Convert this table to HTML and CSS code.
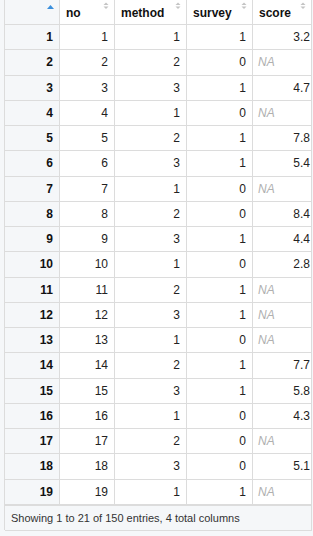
FILE: index.html
```html
<!DOCTYPE html>
<html>
<head>
<meta charset="utf-8">
<link rel="stylesheet" href="styles.css">
</head>
<body>
<div class="grid">
  <div class="hc rn"><svg class="asc" width="7" height="4" viewBox="0 0 7 4"><polygon points="3.5,0 7,4 0,4" /></svg></div>
  <div class="hc"><span>no</span><svg class="sort" width="6" height="8" viewBox="0 0 6 8"><polygon points="3,0.5 5.5,3 0.5,3"/><polygon points="0.5,4.5 5.5,4.5 3,7"/></svg></div>
  <div class="hc"><span>method</span><svg class="sort" width="6" height="8" viewBox="0 0 6 8"><polygon points="3,0.5 5.5,3 0.5,3"/><polygon points="0.5,4.5 5.5,4.5 3,7"/></svg></div>
  <div class="hc"><span>survey</span><svg class="sort" width="6" height="8" viewBox="0 0 6 8"><polygon points="3,0.5 5.5,3 0.5,3"/><polygon points="0.5,4.5 5.5,4.5 3,7"/></svg></div>
  <div class="hc last"><span>score</span><svg class="sort" width="6" height="8" viewBox="0 0 6 8"><polygon points="3,0.5 5.5,3 0.5,3"/><polygon points="0.5,4.5 5.5,4.5 3,7"/></svg></div>

  <div class="c rn">1</div><div class="c">1</div><div class="c">1</div><div class="c">1</div><div class="c sc">3.2</div>
  <div class="c rn">2</div><div class="c">2</div><div class="c">2</div><div class="c">0</div><div class="c na">NA</div>
  <div class="c rn">3</div><div class="c">3</div><div class="c">3</div><div class="c">1</div><div class="c sc">4.7</div>
  <div class="c rn">4</div><div class="c">4</div><div class="c">1</div><div class="c">0</div><div class="c na">NA</div>
  <div class="c rn">5</div><div class="c">5</div><div class="c">2</div><div class="c">1</div><div class="c sc">7.8</div>
  <div class="c rn">6</div><div class="c">6</div><div class="c">3</div><div class="c">1</div><div class="c sc">5.4</div>
  <div class="c rn">7</div><div class="c">7</div><div class="c">1</div><div class="c">0</div><div class="c na">NA</div>
  <div class="c rn">8</div><div class="c">8</div><div class="c">2</div><div class="c">0</div><div class="c sc">8.4</div>
  <div class="c rn">9</div><div class="c">9</div><div class="c">3</div><div class="c">1</div><div class="c sc">4.4</div>
  <div class="c rn">10</div><div class="c">10</div><div class="c">1</div><div class="c">0</div><div class="c sc">2.8</div>
  <div class="c rn">11</div><div class="c">11</div><div class="c">2</div><div class="c">1</div><div class="c na">NA</div>
  <div class="c rn">12</div><div class="c">12</div><div class="c">3</div><div class="c">1</div><div class="c na">NA</div>
  <div class="c rn">13</div><div class="c">13</div><div class="c">1</div><div class="c">0</div><div class="c na">NA</div>
  <div class="c rn">14</div><div class="c">14</div><div class="c">2</div><div class="c">1</div><div class="c sc">7.7</div>
  <div class="c rn">15</div><div class="c">15</div><div class="c">3</div><div class="c">1</div><div class="c sc">5.8</div>
  <div class="c rn">16</div><div class="c">16</div><div class="c">1</div><div class="c">0</div><div class="c sc">4.3</div>
  <div class="c rn">17</div><div class="c">17</div><div class="c">2</div><div class="c">0</div><div class="c na">NA</div>
  <div class="c rn">18</div><div class="c">18</div><div class="c">3</div><div class="c">0</div><div class="c sc">5.1</div>
  <div class="c rn">19</div><div class="c">19</div><div class="c">1</div><div class="c">1</div><div class="c na">NA</div>

  <div class="footer">Showing 1 to 21 of 150 entries, 4 total columns</div>
</div>
</body>
</html>
```
FILE: styles.css
```css
html, body {
  margin: 0;
  padding: 0;
  background: #f5f7f9;
}
body {
  font-family: "Liberation Sans", Arial, sans-serif;
  font-size: 12px;
  color: #222;
  width: 313px;
  height: 536px;
  overflow: hidden;
}
.grid {
  margin-left: 4px;
  width: 308px;
  display: grid;
  grid-template-columns: 55px 55px 72px 66px 59px;
  grid-template-rows: 25px;
  grid-auto-rows: 25.26px;
  border-left: 1px solid #dcdcdc;
}
.hc, .c {
  box-sizing: border-box;
  border-right: 1px solid #dcdcdc;
  border-bottom: 1px solid #dcdcdc;
  background: #fff;
}
.hc {
  display: flex;
  justify-content: space-between;
  align-items: center;
  padding: 0 5px 0 6px;
  font-weight: bold;
  font-size: 12px;
  color: #111;
}
.hc span {
  padding-top: 1px;
}
.hc.rn {
  justify-content: flex-end;
}
.rn {
  background: #f5f7f9;
}
.asc {
  align-self: flex-start;
  margin-top: 5px;
  fill: #3a8fdc;
}
.sort {
  align-self: flex-start;
  margin-top: 2px;
  fill: #c4c4c4;
}
.c {
  display: flex;
  align-items: center;
  justify-content: flex-end;
  padding: 0 6px 0 6px;
}
.c.rn {
  font-weight: bold;
  color: #111;
}
.c.sc {
  padding-right: 1px;
}
.c.na {
  justify-content: flex-start;
  padding-left: 5px;
  font-style: italic;
  color: #b0b0b0;
}
.footer {
  grid-column: 1 / -1;
  box-sizing: border-box;
  height: 26px;
  border-top: 1px solid #dcdcdc;
  border-right: 1px solid #dcdcdc;
  border-bottom: 1px solid #dcdcdc;
  background: #f5f7f9;
  display: flex;
  align-items: center;
  padding-left: 6px;
  font-size: 11px;
  color: #333;
}
```
